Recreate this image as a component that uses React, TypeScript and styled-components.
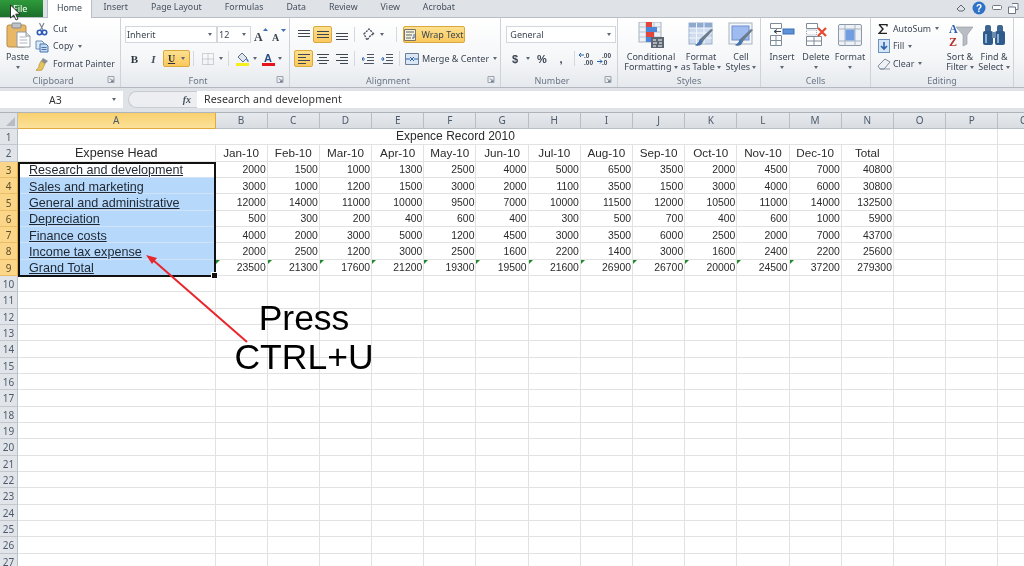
import { Fragment } from "react";
import styled, { createGlobalStyle } from "styled-components";

const GlobalStyle = createGlobalStyle`
  html, body { margin: 0; padding: 0; background: #fff; }
  body { font-family: "Noto Sans", "Liberation Sans", sans-serif; }
`;

const Page = styled.div`
  position: relative;
  width: 1024px;
  height: 566px;
  overflow: hidden;
  background: #dfe3e8;
  filter: blur(0.3px);
`;

/* tabs */
const TabBar = styled.div`
  display: flex;
  align-items: flex-end;
  height: 18px;
  background: #dfe3e8;
  border-bottom: 1px solid #b9bec5;
  box-sizing: border-box;
`;
const FileTab = styled.div`
  width: 43px;
  height: 17px;
  margin-right: 4px;
  background: linear-gradient(#2f9a3a, #1c6f2b);
  color: #fff;
  font-size: 9px;
  line-height: 17px;
  padding-left: 13px;
  box-sizing: border-box;
`;
const Tab = styled.div<{ $active?: boolean }>`
  height: 18px;
  padding: 0 11.5px;
  box-sizing: border-box;
  font-size: 8.8px;
  line-height: 17px;
  color: #46505c;
  ${(p) =>
    p.$active &&
    `background:#fff;border:1px solid #b9bec5;border-bottom:0;border-top:0;width:45px;padding:0;text-align:center;margin-bottom:-1px;color:#3a4452;`}
`;
const WindowIcons = styled.div`
  margin-left: auto;
  display: flex;
  align-items: center;
  gap: 6px;
  height: 18px;
  padding-right: 5px;
`;

/* ribbon */
const Ribbon = styled.div`
  display: flex;
  height: 69px;
  background: linear-gradient(#ffffff 0%, #f6f7f9 55%, #e6e9ed 100%);
  border-bottom: 1px solid #b4b9c0;
`;
const Group = styled.div<{ $w: number }>`
  width: ${(p) => p.$w}px;
  flex: none;
  display: flex;
  flex-direction: column;
  border-right: 1px solid #cfd3d9;
  box-sizing: border-box;
`;
const GroupBody = styled.div<{ $pl?: number }>`
  flex: 1;
  display: flex;
  padding-left: ${(p) => p.$pl ?? 0}px;
  min-height: 0;
`;
const GroupFoot = styled.div`
  height: 14px;
  display: flex;
  align-items: center;
  font-size: 9px;
  color: #6a7686;
`;
const GroupName = styled.div`
  flex: 1;
  text-align: center;
`;
const Launcher = styled.svg`
  width: 14px;
  height: 8px;
`;
const Rows = styled.div`
  display: flex;
  flex-direction: column;
  gap: 7px;
  padding-top: 8px;
`;
const Row = styled.div`
  display: flex;
  align-items: center;
  height: 17px;
`;
const SmallColumn = styled.div<{ $w: number }>`
  width: ${(p) => p.$w}px;
  flex: none;
  padding-top: 2px;
  display: flex;
  flex-direction: column;
`;
const SmallItem = styled.div`
  display: flex;
  align-items: center;
  height: 17.6px;
  gap: 2px;
  font-size: 8.8px;
  color: #3c4654;
  white-space: nowrap;
`;
const ItemCaret = styled.span`
  margin-left: 2px;
  display: inline-flex;
`;
const Large = styled.div<{ $w: number }>`
  width: ${(p) => p.$w}px;
  flex: none;
  display: flex;
  flex-direction: column;
  align-items: center;
  padding-top: 4px;
  font-size: 9px;
  line-height: 10px;
  color: #3c4654;
  text-align: center;
  white-space: nowrap;
  svg.big {
    width: 26px;
    height: 26px;
    margin-bottom: 4px;
  }
`;
const Caret = styled.span<{ $ml?: number; $mr?: number }>`
  display: inline-block;
  width: 0;
  height: 0;
  flex: none;
  vertical-align: middle;
  margin-left: ${(p) => p.$ml ?? 0}px;
  margin-right: ${(p) => p.$mr ?? 0}px;
  border-left: 2.5px solid transparent;
  border-right: 2.5px solid transparent;
  border-top: 3px solid #5d6876;
`;
const CaretLine = styled.div`
  height: 10px;
  display: flex;
  align-items: center;
`;
const Tool = styled.div<{ $w: number; $active?: boolean }>`
  width: ${(p) => p.$w}px;
  height: 17px;
  flex: none;
  display: flex;
  align-items: center;
  justify-content: center;
  box-sizing: border-box;
  font-size: 9px;
  color: #3c4654;
  border-radius: 2px;
  white-space: nowrap;
  ${(p) =>
    p.$active &&
    `background:linear-gradient(#fde08f,#fbc95e);border:1px solid #d9a93e;`}
`;
const Sep = styled.div<{ $mx: number }>`
  width: 1px;
  height: 15px;
  flex: none;
  margin: 0 ${(p) => p.$mx}px;
  background: #d5d8dd;
`;
const Select = styled.div<{ $w: number }>`
  width: ${(p) => p.$w}px;
  height: 17px;
  flex: none;
  box-sizing: border-box;
  background: #fff;
  border: 1px solid #d3d7dd;
  display: flex;
  align-items: center;
  justify-content: space-between;
  padding: 0 4px 0 1px;
  font-size: 9px;
  color: #3c4654;
`;
const GlyphB = styled.span`
  font: bold 11px "Liberation Serif", serif;
  color: #2c3440;
`;
const GlyphI = styled.span`
  font: italic bold 11px "Liberation Serif", serif;
  color: #46505c;
`;
const GlyphU = styled.span`
  font: bold 10px "Liberation Serif", serif;
  color: #2c3440;
  text-decoration: underline;
`;
const GlyphMoney = styled.span`
  font: bold 11px "Liberation Sans", sans-serif;
  color: #3c4654;
`;
const WrapLabel = styled.span`
  margin-left: 3px;
  font-size: 9px;
`;
const MergeLabel = styled.span`
  margin: 0 4px 0 1px;
  font-size: 9px;
  color: #3c4654;
  white-space: nowrap;
`;

/* formula bar */
const FormulaBand = styled.div`
  height: 24px;
  padding: 3px 0 4px;
  box-sizing: border-box;
  display: flex;
  background: #dfe3e8;
`;
const NameBox = styled.div`
  width: 123px;
  background: #fff;
  display: flex;
  align-items: center;
  flex: none;
  font-size: 10.5px;
  color: #333;
  padding-left: 49px;
  box-sizing: border-box;
`;
const FormulaControls = styled.div`
  width: 69px;
  margin-left: 5px;
  flex: none;
  border-radius: 9px 0 0 9px;
  background: #eceef1;
  border: 1px solid #c8ccd2;
  border-right: 0;
  box-sizing: border-box;
  display: flex;
  align-items: center;
  justify-content: flex-end;
  padding-right: 6px;
  font: italic bold 10px "Liberation Serif", serif;
  color: #47505c;
`;
const FormulaInput = styled.div`
  flex: 1;
  background: #fff;
  font-size: 10.6px;
  line-height: 17px;
  padding-left: 7px;
  color: #333;
  letter-spacing: 0.1px;
`;

/* sheet */
const Sheet = styled.div`
  position: relative;
  display: grid;
  grid-template-columns: 18px 197.5px repeat(16, 52.2px);
  grid-template-rows: 15.5px 16px 17.2px;
  grid-auto-rows: 16.33px;
  background: #fff;
  border-top: 1px solid #aeb3ba;
  font-family: "Liberation Sans", Arial, sans-serif;
`;
const Corner = styled.div`
  background: #dfe3e8;
  border-right: 1px solid #b9bec5;
  border-bottom: 1px solid #b9bec5;
  box-sizing: border-box;
  position: relative;
  overflow: hidden;
  &::after {
    content: "";
    position: absolute;
    right: 2px;
    bottom: 2px;
    border-left: 9px solid transparent;
    border-bottom: 9px solid #b7bcc3;
  }
`;
const ColHead = styled.div<{ $sel?: boolean }>`
  display: flex;
  align-items: center;
  justify-content: center;
  font-family: "Noto Sans", sans-serif;
  font-size: 10px;
  color: #4d5a6b;
  box-sizing: border-box;
  background: ${(p) =>
    p.$sel ? "linear-gradient(#f9d06e,#fbe199)" : "linear-gradient(#e6e9ed,#d9dde2)"};
  border-right: 1px solid ${(p) => (p.$sel ? "#e2a93f" : "#b9bec5")};
  border-bottom: 1px solid ${(p) => (p.$sel ? "#e2a93f" : "#b9bec5")};
`;
const RowHead = styled.div<{ $sel?: boolean }>`
  display: flex;
  align-items: center;
  justify-content: center;
  font-family: "Noto Sans", sans-serif;
  font-size: 10px;
  padding-top: 1px;
  color: ${(p) => (p.$sel ? "#5b4f2c" : "#4d5a6b")};
  box-sizing: border-box;
  background: ${(p) => (p.$sel ? "#fbd588" : "#e1e5ea")};
  border-right: 1px solid ${(p) => (p.$sel ? "#e2a93f" : "#b9bec5")};
  border-bottom: 1px solid ${(p) => (p.$sel ? "#eabd66" : "#c3c8ce")};
`;
const Cell = styled.div<{ $num?: boolean }>`
  position: relative;
  box-sizing: border-box;
  border-right: 1px solid #e2e2e2;
  border-bottom: 1px solid #e2e2e2;
  display: flex;
  align-items: center;
  white-space: nowrap;
  color: #2b2b2b;
  font-size: ${(p) => (p.$num ? 10.4 : 11.7)}px;
  justify-content: ${(p) => (p.$num ? "flex-end" : "center")};
  padding-right: ${(p) => (p.$num ? 1 : 0)}px;
  padding-top: ${(p) => (p.$num ? 1 : 0)}px;
`;
const TitleCell = styled.div`
  grid-column: 2 / span 14;
  display: flex;
  align-items: center;
  justify-content: center;
  box-sizing: border-box;
  border-right: 1px solid #e2e2e2;
  border-bottom: 1px solid #e2e2e2;
  font-size: 12px;
  color: #2b2b2b;
`;
const HeadCell = styled(Cell)`
  font-size: 12.6px;
`;
const NameCell = styled.div<{ $sel?: boolean }>`
  box-sizing: border-box;
  display: flex;
  align-items: center;
  padding: 2px 0 0 11px;
  font-size: 12.6px;
  color: #1e2732;
  text-decoration: underline;
  background: ${(p) => (p.$sel ? "#b6d8fb" : "#fff")};
  border-bottom: 1px solid #cfe2f8;
`;
const ErrorMark = styled.span`
  position: absolute;
  top: 0;
  left: 0;
  border-top: 4px solid #1f8a2c;
  border-right: 4px solid transparent;
`;
const Selection = styled.div`
  position: absolute;
  left: 18px;
  top: 48.5px;
  width: 198px;
  height: 115px;
  box-sizing: border-box;
  border: 2px solid #111;
  pointer-events: none;
  &::after {
    content: "";
    position: absolute;
    right: -4px;
    bottom: -4px;
    width: 5px;
    height: 5px;
    background: #111;
    border: 1px solid #fff;
  }
`;
const Callout = styled.div`
  position: absolute;
  left: 204px;
  top: 299px;
  width: 200px;
  text-align: center;
  font-family: "Liberation Sans", Arial, sans-serif;
  font-size: 35.5px;
  line-height: 39px;
  color: #000;
`;
const Overlay = styled.svg`
  position: absolute;
  left: 0;
  top: 0;
  pointer-events: none;
`;

const Launch = () => (
  <Launcher viewBox="0 0 14 8">
    <path d="M2 .5h6v6H2z" fill="none" stroke="#9aa3ae" />
    <path d="M4 2.5l3 3M7 3.5v2H5" stroke="#6d7886" fill="none" />
  </Launcher>
);

const PasteIcon = () => (
  <svg className="big" viewBox="0 0 26 26">
    <rect x="2" y="3" width="19" height="22" rx="2" fill="#e9b866" stroke="#b58b4a" />
    <rect x="7" y="1" width="9" height="5" rx="1" fill="#bfc4ca" stroke="#858b92" />
    <path d="M12 10h9l4 4v11H12z" fill="#fff" stroke="#8f98a3" />
    <path d="M21 10v4h4" fill="#dfe5ec" stroke="#8f98a3" />
    <path d="M14.5 15h7M14.5 18h8M14.5 21h8" stroke="#aeb6c0" />
  </svg>
);
const CutIcon = () => (
  <svg width="12" height="14" viewBox="0 0 12 14">
    <path d="M8 1L4.5 8M3.5 1L7 8" stroke="#7d8894" strokeWidth="1.2" />
    <circle cx="3.5" cy="10.5" r="2.2" fill="none" stroke="#2b59b8" strokeWidth="1.6" />
    <circle cx="8.5" cy="10.5" r="2.2" fill="none" stroke="#2b59b8" strokeWidth="1.6" />
  </svg>
);
const CopyIcon = () => (
  <svg width="14" height="13" viewBox="0 0 14 13">
    <path d="M1 1h6l2 2v6H1z" fill="#dbe8f7" stroke="#6a8db8" />
    <path d="M5 4h6l2 2v6H5z" fill="#c4d9f2" stroke="#4a76ad" />
    <path d="M6.5 7.5h5M6.5 9.5h5" stroke="#4a76ad" />
  </svg>
);
const PainterIcon = () => (
  <svg width="14" height="14" viewBox="0 0 14 14">
    <path d="M8 1l5 3-3 3-4-3z" fill="#8a8f96" />
    <path d="M6 4l4 3-3 6c-2 1-5 1-6 0 2-1 3-3 3-5z" fill="#e8c25a" stroke="#a88732" strokeWidth=".6" />
  </svg>
);
const GrowIcon = ({ up }: { up?: boolean }) => (
  <svg width="14" height="14" viewBox="0 0 14 14">
    <text x="0" y="13" fontFamily="Liberation Serif" fontWeight="bold" fontSize={up ? 12 : 10} fill="#3a424e">
      A
    </text>
    <path d={up ? "M9 3l2.5-3L14 3z" : "M9 1l2.5 3L14 1z"} fill="#3f6fb5" />
  </svg>
);
const BordersIcon = () => (
  <svg width="12" height="12" viewBox="0 0 12 12">
    <path d="M.5.5h11v11H.5zM6 .5v11M.5 6h11" fill="none" stroke="#a7adb5" strokeDasharray="1 1" />
  </svg>
);
const FillIcon = () => (
  <svg width="14" height="14" viewBox="0 0 14 14">
    <path d="M6 1l5 5-4 4-5-5z" fill="#dfe6ee" stroke="#5d7185" />
    <path d="M10 6c2 1 3 3 2.500 4-1 0-2-1-2.500-4z" fill="#3f6fb5" />
    <rect x="0" y="11" width="13" height="3" fill="#f5ee1a" />
  </svg>
);
const ColorIcon = () => (
  <svg width="14" height="14" viewBox="0 0 14 14">
    <text x="2" y="10" fontFamily="Liberation Sans" fontWeight="bold" fontSize="11" fill="#2b4d86">
      A
    </text>
    <rect x="0" y="11" width="13" height="3" fill="#e8141c" />
  </svg>
);
const Lines = ({ ys, x }: { ys: number[]; x: [number, number][] }) => (
  <svg width="12" height="12" viewBox="0 0 12 12">
    {ys.map((y, i) => (
      <path key={y} d={`M${x[i][0]} ${y}H${x[i][1]}`} stroke="#3f4650" strokeWidth="1" />
    ))}
  </svg>
);
const full: [number, number][] = [
  [0, 12],
  [0, 12],
  [0, 12],
];
const OrientIcon = () => (
  <svg width="14" height="13" viewBox="0 0 14 13">
    <path d="M2 6l5-5 5 5-3 1-4 5z" fill="none" stroke="#4b5460" strokeWidth="1.4" strokeDasharray="2 1" />
  </svg>
);
const WrapIcon = () => (
  <svg width="14" height="12" viewBox="0 0 14 12">
    <path d="M.5.500h11v11H.5z" fill="#f7f0d8" stroke="#7c7465" />
    <path d="M2 3h8M2 6h6M2 9h5" stroke="#5c6673" />
    <path d="M10 5v4H8" fill="none" stroke="#2c62ad" />
  </svg>
);
const MergeIcon = () => (
  <svg width="14" height="12" viewBox="0 0 14 12">
    <path d="M.5.500h13v11H.5z" fill="#dbe7f4" stroke="#6c7f94" />
    <path d="M1 6h4M9 6h4" stroke="#2c62ad" />
    <path d="M5 4l2 2-2 2M9 4L7 6l2 2" fill="none" stroke="#2c62ad" />
  </svg>
);
const IndentIcon = ({ flip }: { flip?: boolean }) => (
  <svg width="12" height="12" viewBox="0 0 12 12">
    <path d="M5 1.500h7M5 4.500h7M5 7.500h7M2 10.500h10" stroke="#4b5460" />
    <path d={flip ? "M0 6h3M3 6L1.500 4M3 6L1.500 8" : "M0 6h3M0 6l1.500-2M0 6l1.500 2"} stroke="#2c62ad" fill="none" />
  </svg>
);
const DecimalIcon = ({ more }: { more?: boolean }) => (
  <svg width="15" height="13" viewBox="0 0 15 13">
    <text x="5" y="6" fontSize="6.5" fontWeight="bold" fontFamily="Liberation Sans" fill="#3c4654">
      {more ? ".0" : ".00"}
    </text>
    <text x="5" y="12.500" fontSize="6.5" fontWeight="bold" fontFamily="Liberation Sans" fill="#3c4654">
      {more ? ".00" : ".0"}
    </text>
    <path d={more ? "M0 3h5M0 3l2-2M0 3l2 2" : "M0 9.500h5M5 9.500l-2-2M5 9.500l-2 2"} stroke="#2c62ad" fill="none" />
  </svg>
);
const CondIcon = () => (
  <svg className="big" viewBox="0 0 26 26">
    <rect x="1" y="0" width="22" height="20" fill="#eef2f7" stroke="#a7b1bd" />
    <path d="M1 5h22M1 10h22M1 15h22M8 0v20M16 0v20" stroke="#b9c2cd" />
    <rect x="8" y="0" width="6" height="5" fill="#e2453a" />
    <rect x="8" y="5" width="11" height="5" fill="#4d86d6" />
    <rect x="8" y="10" width="8" height="5" fill="#e2453a" />
    <rect x="8" y="15" width="5" height="5" fill="#4d86d6" />
    <rect x="13" y="15" width="13" height="11" fill="#5c6673" />
    <path d="M15 18h3M20 18h4M15 21h4M21 21h3M15 24h3M20 24h4" stroke="#fff" />
  </svg>
);
const TableIcon = () => (
  <svg className="big" viewBox="0 0 26 26">
    <rect x="1" y="1" width="23" height="21" fill="#cfdcf0" stroke="#9db0c8" />
    <rect x="1" y="1" width="23" height="5" fill="#8faad0" />
    <path d="M1 6h23M1 11h23M1 16h23M8.500 1v21M16 1v21" stroke="#f2f6fb" />
    <path d="M25 8L16 18l-3 5c-2 1-5 1-6 0 3-1 4-3 5-6l11-10z" fill="#6c7c8d" />
    <path d="M12 17l2 3-3 3c-2 1-3 0-4 0 3-1 4-3 5-6z" fill="#3e73b8" />
  </svg>
);
const StylesIcon = () => (
  <svg className="big" viewBox="0 0 26 26">
    <rect x="1" y="1" width="23" height="21" fill="#f2f5f9" stroke="#a9b3c0" />
    <rect x="4" y="4" width="17" height="14" fill="#9fbcf0" stroke="#6d8fd0" />
    <path d="M25 8L16 18l-3 5c-2 1-5 1-6 0 3-1 4-3 5-6l11-10z" fill="#6c7c8d" />
    <path d="M12 17l2 3-3 3c-2 1-3 0-4 0 3-1 4-3 5-6z" fill="#3e73b8" />
  </svg>
);
const InsertIcon = () => (
  <svg className="big" viewBox="0 0 26 26">
    <path d="M1.500 1.500h11v5h-11zM1.500 13.500h11v5h-11zM1.500 18.500h11v5h-11zM7 13.500v10" fill="#fff" stroke="#7f8b99" />
    <rect x="14" y="7" width="11" height="5" fill="#5b92d8" stroke="#3f6fb5" />
    <path d="M12 9.500H5M5 9.500l3-2M5 9.500l3 2" stroke="#3c4654" fill="none" />
  </svg>
);
const DeleteIcon = () => (
  <svg className="big" viewBox="0 0 26 26">
    <path d="M3.500 1.500h11v5h-11zM3.500 14.500h15v9h-15zM11 14.500v9M3.500 19h15" fill="#fff" stroke="#7f8b99" />
    <path d="M3.500 8h10v5h-10z" fill="none" stroke="#9aa5b1" strokeDasharray="1 1" />
    <path d="M15 6l8 8M23 6l-8 8" stroke="#e4492d" strokeWidth="2.200" />
  </svg>
);
const FormatIcon = () => (
  <svg className="big" viewBox="0 0 26 26">
    <rect x="1.500" y="2.500" width="23" height="21" rx="1.500" fill="#eef2f7" stroke="#8d98a6" />
    <path d="M1.500 7h23M1.500 19h23M8 2.500v21M18 2.500v21" stroke="#a9b3c0" />
    <rect x="8.500" y="7.500" width="9" height="11" fill="#6f9fe0" />
  </svg>
);
const SigmaIcon = () => (
  <svg width="12" height="10" viewBox="0 0 12 10">
    <path d="M1 .5h8v2M9 9.500H1l4-4.500-4-4.500" fill="none" stroke="#222" strokeWidth="1.400" />
  </svg>
);
const FillDownIcon = () => (
  <svg width="12" height="14" viewBox="0 0 12 14">
    <rect x=".5" y=".5" width="11" height="13" fill="#d5e5f8" stroke="#6f91bd" />
    <path d="M6 3v7M3 7l3 3 3-3" fill="none" stroke="#2c62ad" strokeWidth="1.600" />
  </svg>
);
const EraserIcon = () => (
  <svg width="14" height="12" viewBox="0 0 14 12">
    <path d="M8 1l5 3-6 7H3L1 8z" fill="#eef1f5" stroke="#7f8b99" />
    <path d="M3 11h10" stroke="#8a95a2" />
  </svg>
);
const SortIcon = () => (
  <svg className="big" viewBox="0 0 26 26">
    <text x="2" y="11" fontFamily="Liberation Serif" fontWeight="bold" fontSize="12" fill="#2b5fb4">
      A
    </text>
    <text x="2" y="24" fontFamily="Liberation Serif" fontWeight="bold" fontSize="12" fill="#b5352c">
      Z
    </text>
    <path d="M9 5h17l-6 8v9l-4 2V13z" fill="#b9bec5" stroke="#8e959e" strokeWidth=".6" />
  </svg>
);
const FindIcon = () => (
  <svg className="big" viewBox="0 0 26 26">
    <rect x="4" y="3" width="6" height="8" rx="2" fill="#3f6690" />
    <rect x="16" y="3" width="6" height="8" rx="2" fill="#3f6690" />
    <rect x="2" y="9" width="10" height="14" rx="2" fill="#2f5b8c" />
    <rect x="14" y="9" width="10" height="14" rx="2" fill="#2f5b8c" />
    <rect x="11" y="10" width="4" height="6" fill="#6c8db0" />
    <rect x="4" y="12" width="2" height="9" fill="#8db0d4" />
    <rect x="16" y="12" width="2" height="9" fill="#8db0d4" />
  </svg>
);

const months = ["Jan-10", "Feb-10", "Mar-10", "Apr-10", "May-10", "Jun-10", "Jul-10", "Aug-10", "Sep-10", "Oct-10", "Nov-10", "Dec-10", "Total"];
const columns = "BCDEFGHIJKLMNOPQ".split("");
const records: [string, number[]][] = [
  ["Research and development", [2000, 1500, 1000, 1300, 2500, 4000, 5000, 6500, 3500, 2000, 4500, 7000, 40800]],
  ["Sales and marketing", [3000, 1000, 1200, 1500, 3000, 2000, 1100, 3500, 1500, 3000, 4000, 6000, 30800]],
  ["General and administrative", [12000, 14000, 11000, 10000, 9500, 7000, 10000, 11500, 12000, 10500, 11000, 14000, 132500]],
  ["Depreciation", [500, 300, 200, 400, 600, 400, 300, 500, 700, 400, 600, 1000, 5900]],
  ["Finance costs", [4000, 2000, 3000, 5000, 1200, 4500, 3000, 3500, 6000, 2500, 2000, 7000, 43700]],
  ["Income tax expense", [2000, 2500, 1200, 3000, 2500, 1600, 2200, 1400, 3000, 1600, 2400, 2200, 25600]],
  ["Grand Total", [23500, 21300, 17600, 21200, 19300, 19500, 21600, 26900, 26700, 20000, 24500, 37200, 279300]],
];
const emptyRows = Array.from({ length: 18 }, (_, i) => i + 10);
const blanks = (n: number, key: string) =>
  Array.from({ length: n }, (_, i) => <Cell key={`${key}-${i}`} />);

export default function App() {
  return (
    <>
      <GlobalStyle />
      <Page>
        <TabBar>
          <FileTab>File</FileTab>
          <Tab $active>Home</Tab>
          <Tab>Insert</Tab>
          <Tab>Page Layout</Tab>
          <Tab>Formulas</Tab>
          <Tab>Data</Tab>
          <Tab>Review</Tab>
          <Tab>View</Tab>
          <Tab>Acrobat</Tab>
          <WindowIcons>
            <svg width="10" height="8" viewBox="0 0 10 8">
              <path d="M1 5l4-4 4 4-2 2H3z" fill="none" stroke="#5d6876" />
            </svg>
            <svg width="14" height="14" viewBox="0 0 14 14">
              <circle cx="7" cy="7" r="6.500" fill="#2f73c8" />
              <text x="7" y="10.500" textAnchor="middle" fontSize="10" fontWeight="bold" fontFamily="Liberation Sans" fill="#fff">
                ?
              </text>
            </svg>
            <svg width="10" height="6" viewBox="0 0 10 6">
              <rect x=".5" y=".5" width="9" height="4" rx="1" fill="#fff" stroke="#6d7886" />
            </svg>
            <svg width="11" height="11" viewBox="0 0 11 11">
              <path d="M4 .5h6v6H8M.5 4h7v6.500h-7z" fill="#fff" stroke="#6d7886" />
            </svg>
          </WindowIcons>
        </TabBar>

        <Ribbon>
          <Group $w={121}>
            <GroupBody $pl={2}>
              <Large $w={31}>
                <PasteIcon />
                Paste
                <CaretLine>
                  <Caret />
                </CaretLine>
              </Large>
              <SmallColumn $w={85}>
                <SmallItem>
                  <Tool $w={18}><CutIcon /></Tool>Cut
                </SmallItem>
                <SmallItem>
                  <Tool $w={18}><CopyIcon /></Tool>Copy
                  <ItemCaret><Caret /></ItemCaret>
                </SmallItem>
                <SmallItem>
                  <Tool $w={18}><PainterIcon /></Tool>Format Painter
                </SmallItem>
              </SmallColumn>
            </GroupBody>
            <GroupFoot>
              <GroupName>Clipboard</GroupName>
              <Launch />
            </GroupFoot>
          </Group>

          <Group $w={169}>
            <GroupBody $pl={4}>
              <Rows>
                <Row>
                  <Select $w={92}>Inherit<Caret /></Select>
                  <Select $w={34}>12<Caret /></Select>
                  <Tool $w={20}><GrowIcon up /></Tool>
                  <Tool $w={16}><GrowIcon /></Tool>
                </Row>
                <Row>
                  <Tool $w={19}><GlyphB>B</GlyphB></Tool>
                  <Tool $w={19}><GlyphI>I</GlyphI></Tool>
                  <Tool $w={27} $active>
                    <GlyphU>U</GlyphU>
                    <Caret $ml={6} />
                  </Tool>
                  <Sep $mx={3} />
                  <Tool $w={22}><BordersIcon /></Tool>
                  <Caret $mr={1} />
                  <Sep $mx={4} />
                  <Tool $w={20}><FillIcon /></Tool>
                  <Caret $mr={4} />
                  <Tool $w={16}><ColorIcon /></Tool>
                  <Caret $ml={1} />
                </Row>
              </Rows>
            </GroupBody>
            <GroupFoot>
              <GroupName>Font</GroupName>
              <Launch />
            </GroupFoot>
          </Group>

          <Group $w={211}>
            <GroupBody $pl={4}>
              <Rows>
                <Row>
                  <Tool $w={19}><Lines ys={[1.5, 4.5, 7.5]} x={full} /></Tool>
                  <Tool $w={19} $active><Lines ys={[2.5, 5.5, 8.5]} x={full} /></Tool>
                  <Tool $w={19}><Lines ys={[4.5, 7.5, 10.5]} x={full} /></Tool>
                  <Sep $mx={3} />
                  <Tool $w={22}><OrientIcon /></Tool>
                  <Caret $mr={5} />
                  <Sep $mx={6.5} />
                  <Tool $w={62} $active>
                    <WrapIcon />
                    <WrapLabel>Wrap Text</WrapLabel>
                  </Tool>
                </Row>
                <Row>
                  <Tool $w={19} $active>
                    <Lines ys={[1.5, 4.5, 7.5, 10.5]} x={[[0, 12], [0, 8], [0, 12], [0, 8]]} />
                  </Tool>
                  <Tool $w={19}>
                    <Lines ys={[1.5, 4.5, 7.5, 10.5]} x={[[0, 12], [2, 10], [0, 12], [2, 10]]} />
                  </Tool>
                  <Tool $w={19}>
                    <Lines ys={[1.5, 4.5, 7.5, 10.5]} x={[[0, 12], [4, 12], [0, 12], [4, 12]]} />
                  </Tool>
                  <Sep $mx={3} />
                  <Tool $w={19}><IndentIcon /></Tool>
                  <Tool $w={19}><IndentIcon flip /></Tool>
                  <Sep $mx={3} />
                  <Tool $w={18}><MergeIcon /></Tool>
                  <MergeLabel>Merge &amp; Center</MergeLabel>
                  <Caret />
                </Row>
              </Rows>
            </GroupBody>
            <GroupFoot>
              <GroupName>Alignment</GroupName>
              <Launch />
            </GroupFoot>
          </Group>

          <Group $w={117}>
            <GroupBody $pl={5}>
              <Rows>
                <Row>
                  <Select $w={110}>
                    &nbsp;General<Caret />
                  </Select>
                </Row>
                <Row>
                  <Tool $w={18}><GlyphMoney>$</GlyphMoney></Tool>
                  <Caret $ml={2} $mr={3} />
                  <Tool $w={18}><GlyphMoney>%</GlyphMoney></Tool>
                  <Tool $w={20}><GlyphMoney>,</GlyphMoney></Tool>
                  <Sep $mx={3} />
                  <Tool $w={17}><DecimalIcon more /></Tool>
                  <Tool $w={19}><DecimalIcon /></Tool>
                </Row>
              </Rows>
            </GroupBody>
            <GroupFoot>
              <GroupName>Number</GroupName>
              <Launch />
            </GroupFoot>
          </Group>

          <Group $w={143}>
            <GroupBody $pl={5}>
              <Large $w={56}>
                <CondIcon />
                Conditional
                <CaretLine>
                  Formatting&nbsp;<Caret />
                </CaretLine>
              </Large>
              <Large $w={44}>
                <TableIcon />
                Format
                <CaretLine>
                  as Table&nbsp;<Caret />
                </CaretLine>
              </Large>
              <Large $w={36}>
                <StylesIcon />
                Cell
                <CaretLine>
                  Styles&nbsp;<Caret />
                </CaretLine>
              </Large>
            </GroupBody>
            <GroupFoot>
              <GroupName>Styles</GroupName>
            </GroupFoot>
          </Group>

          <Group $w={110}>
            <GroupBody $pl={4}>
              <Large $w={34}>
                <InsertIcon />
                Insert
                <CaretLine><Caret /></CaretLine>
              </Large>
              <Large $w={34}>
                <DeleteIcon />
                Delete
                <CaretLine><Caret /></CaretLine>
              </Large>
              <Large $w={34}>
                <FormatIcon />
                Format
                <CaretLine><Caret /></CaretLine>
              </Large>
            </GroupBody>
            <GroupFoot>
              <GroupName>Cells</GroupName>
            </GroupFoot>
          </Group>

          <Group $w={143}>
            <GroupBody $pl={6}>
              <SmallColumn $w={66}>
                <SmallItem>
                  <Tool $w={14}><SigmaIcon /></Tool>AutoSum
                  <ItemCaret><Caret /></ItemCaret>
                </SmallItem>
                <SmallItem>
                  <Tool $w={14}><FillDownIcon /></Tool>Fill
                  <ItemCaret><Caret /></ItemCaret>
                </SmallItem>
                <SmallItem>
                  <Tool $w={14}><EraserIcon /></Tool>Clear
                  <ItemCaret><Caret /></ItemCaret>
                </SmallItem>
              </SmallColumn>
              <Large $w={34}>
                <SortIcon />
                Sort &amp;
                <CaretLine>
                  Filter&nbsp;<Caret />
                </CaretLine>
              </Large>
              <Large $w={34}>
                <FindIcon />
                Find &amp;
                <CaretLine>
                  Select&nbsp;<Caret />
                </CaretLine>
              </Large>
            </GroupBody>
            <GroupFoot>
              <GroupName>Editing</GroupName>
            </GroupFoot>
          </Group>
        </Ribbon>

        <FormulaBand>
          <NameBox>
            A3
            <Caret $ml={50} />
          </NameBox>
          <FormulaControls>fx</FormulaControls>
          <FormulaInput>Research and development</FormulaInput>
        </FormulaBand>

        <Sheet>
          <Corner />
          <ColHead $sel>A</ColHead>
          {columns.map((c) => (
            <ColHead key={c}>{c}</ColHead>
          ))}

          <RowHead>1</RowHead>
          <TitleCell>Expence Record 2010</TitleCell>
          {blanks(3, "r1")}

          <RowHead>2</RowHead>
          <HeadCell>Expense Head</HeadCell>
          {months.map((m) => (
            <Cell key={m}>{m}</Cell>
          ))}
          {blanks(3, "r2")}

          {records.map(([name, values], r) => (
            <Fragment key={name}>
              <RowHead $sel>{r + 3}</RowHead>
              <NameCell $sel={r > 0}>{name}</NameCell>
              {values.map((v, c) => (
                <Cell key={c} $num>
                  {r === 6 && c < 12 && <ErrorMark />}
                  {v}
                </Cell>
              ))}
              {blanks(3, `d${r}`)}
            </Fragment>
          ))}

          {emptyRows.map((n) => (
            <Fragment key={n}>
              <RowHead>{n}</RowHead>
              {blanks(17, `e${n}`)}
            </Fragment>
          ))}
          <Selection />
        </Sheet>

        <Callout>
          Press
          <br />
          CTRL+U
        </Callout>

        <Overlay width="1024" height="566" viewBox="0 0 1024 566">
          <path d="M247 342L153 260" stroke="#e8262c" strokeWidth="2" />
          <path d="M146 255l11 3-5 6z" fill="#e8262c" />
          <path
            d="M10.500 5v13l3.200-3 2.300 5 2-1-2.300-4.800h4.300z"
            fill="#fff"
            stroke="#222"
            strokeWidth=".9"
          />
        </Overlay>
      </Page>
    </>
  );
}
